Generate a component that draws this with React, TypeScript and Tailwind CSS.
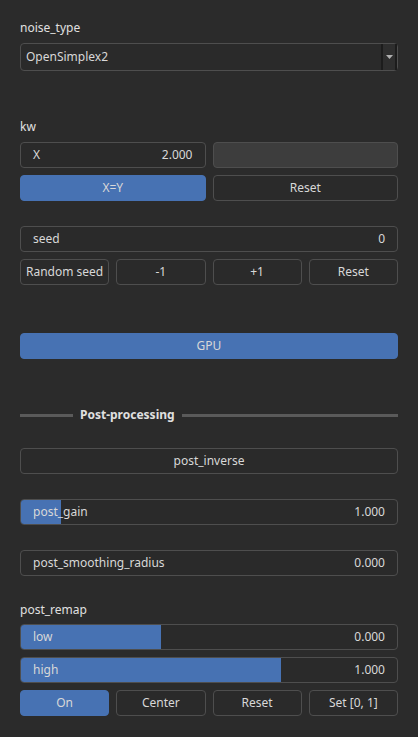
import React from "react";

const field = "h-[26px] rounded-[4px] border border-[#4e4e4e] bg-[#2a2a2a]";

function Btn({ label, active = false }: { label: string; active?: boolean }) {
  return (
    <div
      className={`h-[26px] rounded-[4px] border flex items-center justify-center ${
        active ? "bg-[#4772b3] border-[#4772b3]" : "bg-[#2a2a2a] border-[#4e4e4e]"
      }`}
    >
      {label}
    </div>
  );
}

function Slider({ label, value, fill }: { label: string; value: string; fill: number }) {
  return (
    <div className={`${field} relative overflow-hidden`}>
      {fill > 0 && (
        <div className="absolute left-0 top-0 bottom-0 bg-[#4772b3]" style={{ width: fill }} />
      )}
      <div className="relative flex h-full items-center justify-between px-[12px]">
        <span>{label}</span>
        <span>{value}</span>
      </div>
    </div>
  );
}

export default function App() {
  return (
    <main
      className="min-h-[737px] w-[418px] bg-[#2b2b2b] text-[#d8d8d8] px-[20px] pt-[19px] text-[12px]"
      style={{ fontFamily: '"Noto Sans", "Open Sans", sans-serif' }}
    >
      {/* noise type */}
      <div className="h-[18px] leading-[18px] text-[#e0e0e0]">noise_type</div>
      <div className="mt-[6px] h-[28px] rounded-[4px] border border-[#4e4e4e] bg-[#2a2a2a] flex items-center">
        <span className="pl-[5px] flex-1">OpenSimplex2</span>
        <div className="w-[16px] h-full border-l-2 border-r-2 border-[#1c1c1c] bg-[#2e2e2e] flex items-center justify-center">
          <svg width="7" height="4" viewBox="0 0 7 4">
            <path d="M0 0h7L3.5 4z" fill="#b0b0b0" />
          </svg>
        </div>
      </div>

      {/* kw */}
      <div className="mt-[47px] h-[18px] leading-[18px] text-[#e0e0e0]">kw</div>
      <div className="mt-[6px] grid grid-cols-2 gap-[7px]">
        <div className={`${field} flex items-center justify-between px-[12px]`}>
          <span>X</span>
          <span>2.000</span>
        </div>
        <div className="h-[26px] rounded-[4px] border border-[#4e4e4e] bg-[#3d3d3d]" />
      </div>
      <div className="mt-[7px] grid grid-cols-2 gap-[7px]">
        <Btn label="X=Y" active />
        <Btn label="Reset" />
      </div>

      {/* seed */}
      <div className={`mt-[25px] ${field} flex items-center justify-between px-[12px]`}>
        <span>seed</span>
        <span>0</span>
      </div>
      <div className="mt-[7px] grid grid-cols-4 gap-[7px]">
        <Btn label="Random seed" />
        <Btn label="-1" />
        <Btn label="+1" />
        <Btn label="Reset" />
      </div>

      {/* GPU */}
      <div className="mt-[48px]">
        <Btn label="GPU" active />
      </div>

      {/* post-processing */}
      <div className="mt-[47px] h-[18px] flex items-center gap-[7px]">
        <div className="w-[53px] h-[3px] bg-[#5a5a5a]" />
        <span className="font-bold text-[#e0e0e0]">Post-processing</span>
        <div className="flex-1 h-[3px] bg-[#5a5a5a]" />
      </div>

      <div className="mt-[24px]">
        <Btn label="post_inverse" />
      </div>

      <div className="mt-[25px]">
        <Slider label="post_gain" value="1.000" fill={40} />
      </div>

      <div className="mt-[25px]">
        <Slider label="post_smoothing_radius" value="0.000" fill={0} />
      </div>

      {/* post remap */}
      <div className="mt-[25px] h-[18px] leading-[18px] text-[#e0e0e0]">post_remap</div>
      <div className="mt-[5px]">
        <Slider label="low" value="0.000" fill={140} />
      </div>
      <div className="mt-[7px]">
        <Slider label="high" value="1.000" fill={260} />
      </div>
      <div className="mt-[7px] grid grid-cols-4 gap-[7px]">
        <Btn label="On" active />
        <Btn label="Center" />
        <Btn label="Reset" />
        <Btn label="Set [0, 1]" />
      </div>
    </main>
  );
}
